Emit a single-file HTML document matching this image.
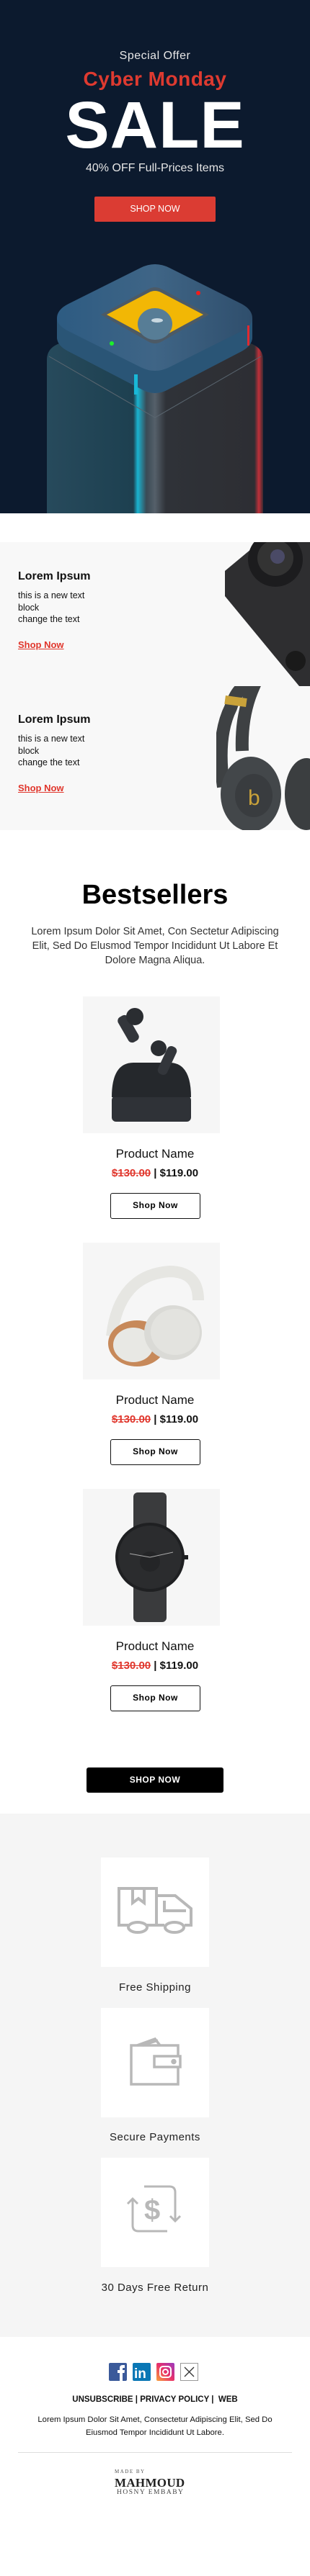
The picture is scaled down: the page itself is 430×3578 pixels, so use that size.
<!DOCTYPE html>
<html><head><meta charset="utf-8"><style>
*{margin:0;padding:0;box-sizing:border-box}
body{width:430px;height:3578px;position:relative;background:#fff;font-family:"Liberation Sans","DejaVu Sans",sans-serif;overflow:hidden}
.a{position:absolute}
.c{position:absolute;left:0;width:430px;text-align:center}
.pimg{position:absolute;left:115px;width:190px;height:190px;background:#f6f6f6;overflow:hidden}
.pn{font-size:17px;color:#111}
.pr{font-size:15px;font-weight:bold;color:#111}
.pr s{color:#e0362c}
.pb{position:absolute;left:153px;width:125px;height:36px;border:1.5px solid #111;border-radius:3px;font-size:12px;font-weight:bold;text-align:center;line-height:33px;letter-spacing:.5px}
.box{position:absolute;left:140px;width:150px;height:152px;background:#fff}
.lbl{font-size:15px;color:#222;letter-spacing:.5px}
</style></head><body>

<!-- HERO -->
<div class="a" style="left:0;top:0;width:430px;height:713px;background:#0c1a2e;overflow:hidden">
  <div class="c" style="top:69px;font-size:16px;color:#e8e8e8;letter-spacing:.5px">Special Offer</div>
  <div class="c" style="top:94px;font-size:28px;font-weight:bold;color:#de3a30;letter-spacing:.5px">Cyber Monday</div>
  <div class="c" style="top:124px;font-size:92px;font-weight:bold;color:#fff;line-height:100px;letter-spacing:1px">SALE</div>
  <div class="c" style="top:225px;font-size:16px;color:#e6e6e6">40% OFF Full-Prices Items</div>
  <div class="a" style="left:131px;top:273px;width:168px;height:35px;background:#db3c33;border-radius:2px;color:#fff;font-size:12.5px;text-align:center;line-height:35px">SHOP NOW</div>
  <svg class="a" style="left:0;top:340px" width="430" height="380" viewBox="0 0 430 380">
    <defs>
      <linearGradient id="bd" x1="0" x2="1" y1="0" y2="0">
        <stop offset="0" stop-color="#274a5c"/><stop offset=".4" stop-color="#1d4050"/>
        <stop offset=".42" stop-color="#1ab3d0"/><stop offset=".46" stop-color="#3a4a55"/>
        <stop offset=".5" stop-color="#55606a"/><stop offset=".55" stop-color="#2f3238"/>
        <stop offset=".96" stop-color="#2d2e33"/><stop offset=".98" stop-color="#c0303a"/><stop offset="1" stop-color="#3a2a30"/>
      </linearGradient>
      <linearGradient id="ld" x1="0" x2="1"><stop offset="0" stop-color="#2d5b82"/><stop offset=".5" stop-color="#3f6586"/><stop offset="1" stop-color="#2f4e6c"/></linearGradient>
    </defs>
    <path d="M65 160 Q65 140 90 135 L215 80 L340 135 Q365 140 365 160 L365 380 L65 380 Z" fill="url(#bd)"/>
    <path d="M68 155 L215 240 L362 155" fill="none" stroke="#5a6670" stroke-width="1"/>
    <path d="M79 102 Q79 90 95 82 L195 32 Q215 22 235 32 L335 82 Q350 90 350 102 L350 128 Q350 140 335 148 L235 200 Q215 212 195 200 L95 148 Q79 140 79 128 Z" fill="url(#ld)"/>
    <path d="M79 102 Q79 112 95 120 L195 170 Q215 180 235 170 L335 120 Q350 112 350 102 L350 128 Q350 140 335 148 L235 200 Q215 212 195 200 L95 148 Q79 140 79 128 Z" fill="#2a5576"/>
    <rect x="186" y="180" width="5" height="28" fill="#19b8d8"/>
    <rect x="343" y="112" width="3" height="28" fill="#e02a30"/>
    <path d="M140 97 L205 62 Q215 56 225 62 L290 97 L225 134 Q215 140 205 134 Z" fill="#4c5a66"/>
    <path d="M148 97 L207 66 Q215 62 223 66 L282 97 L223 129 Q215 133 207 129 Z" fill="#f2b705"/>
    <ellipse cx="215" cy="110" rx="24" ry="22" fill="#577d96"/>
    <ellipse cx="218" cy="105" rx="8" ry="3" fill="#c8d8e0"/>
    <circle cx="155" cy="137" r="3" fill="#1cf02a"/>
    <circle cx="275" cy="67" r="3" fill="#f01c1c"/>
  </svg>
</div>

<!-- FEATURE ROWS -->
<div class="a" style="left:0;top:753px;width:430px;height:400px;background:#f8f8f8"></div>
<svg class="a" style="left:300px;top:753px" width="130" height="200" viewBox="0 0 130 200">
  <path d="M12 40 L60 0 L130 0 L130 200 L115 200 L12 75 Z" fill="#2e2e30"/>
  <circle cx="82" cy="24" r="38" fill="#1c1c1e"/><circle cx="82" cy="22" r="25" fill="#333"/><circle cx="85" cy="20" r="10" fill="#4a4a66"/>
  <circle cx="110" cy="165" r="14" fill="#1a1a1a"/>
</svg>
<svg class="a" style="left:300px;top:953px" width="130" height="200" viewBox="0 0 130 200">
  <path d="M10 140 Q0 70 20 30 Q28 5 40 0 L52 0 Q34 40 36 90" fill="none" stroke="#3e4143" stroke-width="18"/>
  <rect x="12" y="15" width="30" height="12" fill="#c9a23a" transform="rotate(8 27 21)"/>
  <ellipse cx="48" cy="150" rx="42" ry="52" fill="#43474a"/>
  <ellipse cx="52" cy="152" rx="26" ry="30" fill="#393c3f"/>
  <text x="44" y="165" font-size="30" fill="#c9a23a" font-family="Liberation Sans">b</text>
  <ellipse cx="125" cy="150" rx="30" ry="50" fill="#3b3e40"/>
</svg>
<div class="a" style="left:25px;top:792px;font-size:16px;font-weight:bold;color:#111">Lorem Ipsum</div>
<div class="a" style="left:25px;top:819px;font-size:12.5px;line-height:16.5px;color:#111">this is a new text<br>block<br>change the text</div>
<div class="a" style="left:25px;top:888px;font-size:13px;font-weight:bold;color:#e0362c;text-decoration:underline">Shop Now</div>
<div class="a" style="left:25px;top:991px;font-size:16px;font-weight:bold;color:#111">Lorem Ipsum</div>
<div class="a" style="left:25px;top:1018px;font-size:12.5px;line-height:16.5px;color:#111">this is a new text<br>block<br>change the text</div>
<div class="a" style="left:25px;top:1087px;font-size:13px;font-weight:bold;color:#e0362c;text-decoration:underline">Shop Now</div>

<!-- BESTSELLERS -->
<div class="c" style="top:1222px;font-size:38px;font-weight:bold;color:#000">Bestsellers</div>
<div class="a" style="left:30px;width:370px;top:1284px;font-size:14.5px;line-height:20px;text-align:center;color:#333">Lorem Ipsum Dolor Sit Amet, Con Sectetur Adipiscing Elit, Sed Do Elusmod Tempor Incididunt Ut Labore Et Dolore Magna Aliqua.</div>

<div class="pimg" style="top:1384px"><svg width="190" height="190" viewBox="0 0 190 190">
  <rect x="40" y="138" width="110" height="36" rx="6" fill="#2f3237"/>
  <path d="M40 140 Q40 92 70 92 L120 92 Q150 92 150 140 Z" fill="#25282c"/>
  <rect x="55" y="25" width="16" height="40" rx="6" fill="#33363b" transform="rotate(-30 63 45)"/>
  <circle cx="72" cy="28" r="12" fill="#2a2d31"/>
  <rect x="110" y="68" width="14" height="42" rx="6" fill="#33363b" transform="rotate(25 117 89)"/>
  <circle cx="105" cy="72" r="11" fill="#2a2d31"/>
</svg></div>
<div class="c pn" style="top:1593px">Product Name</div>
<div class="c pr" style="top:1621px"><s>$130.00</s> | $119.00</div>
<div class="pb" style="top:1657px">Shop Now</div>

<div class="pimg" style="top:1726px"><svg width="190" height="190" viewBox="0 0 190 190">
  <path d="M40 130 Q50 45 120 40 Q160 40 160 80" fill="none" stroke="#e6e6e2" stroke-width="16"/>
  <ellipse cx="75" cy="140" rx="40" ry="32" fill="#c7895a"/>
  <ellipse cx="70" cy="142" rx="28" ry="24" fill="#e8e8e4"/>
  <ellipse cx="125" cy="125" rx="40" ry="38" fill="#dadad6"/>
  <ellipse cx="128" cy="124" rx="34" ry="32" fill="#e3e3df"/>
</svg></div>
<div class="c pn" style="top:1935px">Product Name</div>
<div class="c pr" style="top:1963px"><s>$130.00</s> | $119.00</div>
<div class="pb" style="top:1999px">Shop Now</div>

<div class="pimg" style="top:2068px"><svg width="190" height="190" viewBox="0 0 190 190">
  <rect x="70" y="5" width="46" height="180" rx="6" fill="#3a3b3d"/>
  <circle cx="93" cy="95" r="48" fill="#1f2022"/>
  <circle cx="93" cy="95" r="44" fill="#2b2c2e"/>
  <circle cx="93" cy="101" r="14" fill="#242527"/>
  <line x1="93" y1="95" x2="65" y2="90" stroke="#aaa" stroke-width="1"/>
  <line x1="93" y1="95" x2="125" y2="88" stroke="#aaa" stroke-width="1"/>
  <rect x="140" y="92" width="6" height="6" fill="#1f2022"/>
</svg></div>
<div class="c pn" style="top:2277px">Product Name</div>
<div class="c pr" style="top:2305px"><s>$130.00</s> | $119.00</div>
<div class="pb" style="top:2341px">Shop Now</div>

<div class="a" style="left:120px;top:2455px;width:190px;height:35px;background:#000;border-radius:3px;color:#fff;font-size:12px;font-weight:bold;text-align:center;line-height:35px;letter-spacing:.5px">SHOP NOW</div>

<!-- FEATURES -->
<div class="a" style="left:0;top:2519px;width:430px;height:727px;background:#f5f5f5"></div>
<div class="box" style="top:2580px"><svg width="150" height="152" viewBox="0 0 150 152" fill="none" stroke="#b8b8b8" stroke-width="4">
  <path d="M38 94 L25 94 L25 43 L77 43 L77 94 L64 94"/>
  <path d="M44 43 L44 63 L52 57 L60 63 L60 43"/>
  <path d="M77 94 L77 53 L103 53 L125 71 L125 94 L116 94"/>
  <path d="M88 60 L88 74 L118 74"/>
  <path d="M77 94 L88 94"/>
  <ellipse cx="51" cy="97" rx="13" ry="7"/><ellipse cx="102" cy="97" rx="13" ry="7"/>
</svg></div>
<div class="c lbl" style="top:2752px">Free Shipping</div>
<div class="box" style="top:2789px"><svg width="150" height="152" viewBox="0 0 150 152" fill="none" stroke="#b8b8b8" stroke-width="3.5">
  <rect x="42" y="52" width="65" height="54"/>
  <path d="M50 52 L75 43 L82 52"/><path d="M58 52 L79 45"/>
  <rect x="74" y="67" width="36" height="15" fill="#fff"/><circle cx="101" cy="74.5" r="2" fill="#b8b8b8"/>
</svg></div>
<div class="c lbl" style="top:2960px">Secure Payments</div>
<div class="box" style="top:2997px"><svg width="150" height="152" viewBox="0 0 150 152" fill="none" stroke="#b8b8b8" stroke-width="3">
  <path d="M60 40 L95 40 Q103 40 103 48 L103 88"/><path d="M96 81 L103 88 L110 81"/>
  <path d="M92 102 L52 102 Q44 102 44 94 L44 57"/><path d="M37 64 L44 57 L51 64"/>
  <text x="60" y="86" font-size="40" font-weight="bold" fill="#b8b8b8" stroke="none" font-family="Liberation Sans">$</text>
</svg></div>
<div class="c lbl" style="top:3169px">30 Days Free Return</div>

<!-- FOOTER -->
<svg class="a" style="left:151px;top:3282px" width="125" height="25" viewBox="0 0 125 25">
  <rect x="0" y="0" width="25" height="25" rx="2" fill="#3b5a9a"/>
  <path d="M15 25 L15 14 L12 14 L12 10 L15 10 L15 7 Q15 3 19 3 L22 3 L22 7 L20 7 Q19 7 19 8 L19 10 L22 10 L21.5 14 L19 14 L19 25Z" fill="#fff"/>
  <rect x="33" y="0" width="25" height="25" rx="2" fill="#0a77b5"/>
  <text x="35" y="21" font-size="19" font-weight="bold" fill="#fff" font-family="Liberation Sans">in</text>
  <defs><linearGradient id="ig" x1="0" y1="1" x2="1" y2="0"><stop offset="0" stop-color="#f9a23a"/><stop offset=".5" stop-color="#e8306a"/><stop offset="1" stop-color="#9a3bc0"/></linearGradient></defs>
  <rect x="66" y="0" width="25" height="25" rx="2" fill="url(#ig)"/>
  <rect x="71" y="5" width="15" height="15" rx="4" fill="none" stroke="#fff" stroke-width="2"/><circle cx="78.5" cy="12.5" r="3.5" fill="none" stroke="#fff" stroke-width="2"/>
  <rect x="99.5" y=".5" width="24" height="24" fill="#fff" stroke="#999"/>
  <path d="M105 6 L118 19 M118 6 L105 19" stroke="#333" stroke-width="1.3"/>
</svg>
<div class="c" style="top:3327px;font-size:11.5px;font-weight:bold;color:#111">UNSUBSCRIBE | PRIVACY POLICY | &nbsp;WEB</div>
<div class="a" style="left:30px;width:370px;top:3352px;font-size:11.3px;line-height:18px;text-align:center;color:#111">Lorem Ipsum Dolor Sit Amet, Consectetur Adipiscing Elit, Sed Do Eiusmod Tempor Incididunt Ut Labore.</div>
<div class="a" style="left:25px;top:3406px;width:380px;height:1px;background:#ddd"></div>
<div class="a" style="left:159px;top:3430px;font-family:'Liberation Serif',serif;color:#222;line-height:1">
  <div style="font-size:7px;letter-spacing:1.5px;color:#555">MADE BY</div>
  <div style="font-size:17px;font-weight:bold;margin-top:3px;letter-spacing:.3px">MAHMOUD</div>
  <div style="font-size:9.5px;letter-spacing:1.5px;margin-top:1px;padding-left:3px;color:#444">HOSNY EMBABY</div>
</div>
</body></html>
